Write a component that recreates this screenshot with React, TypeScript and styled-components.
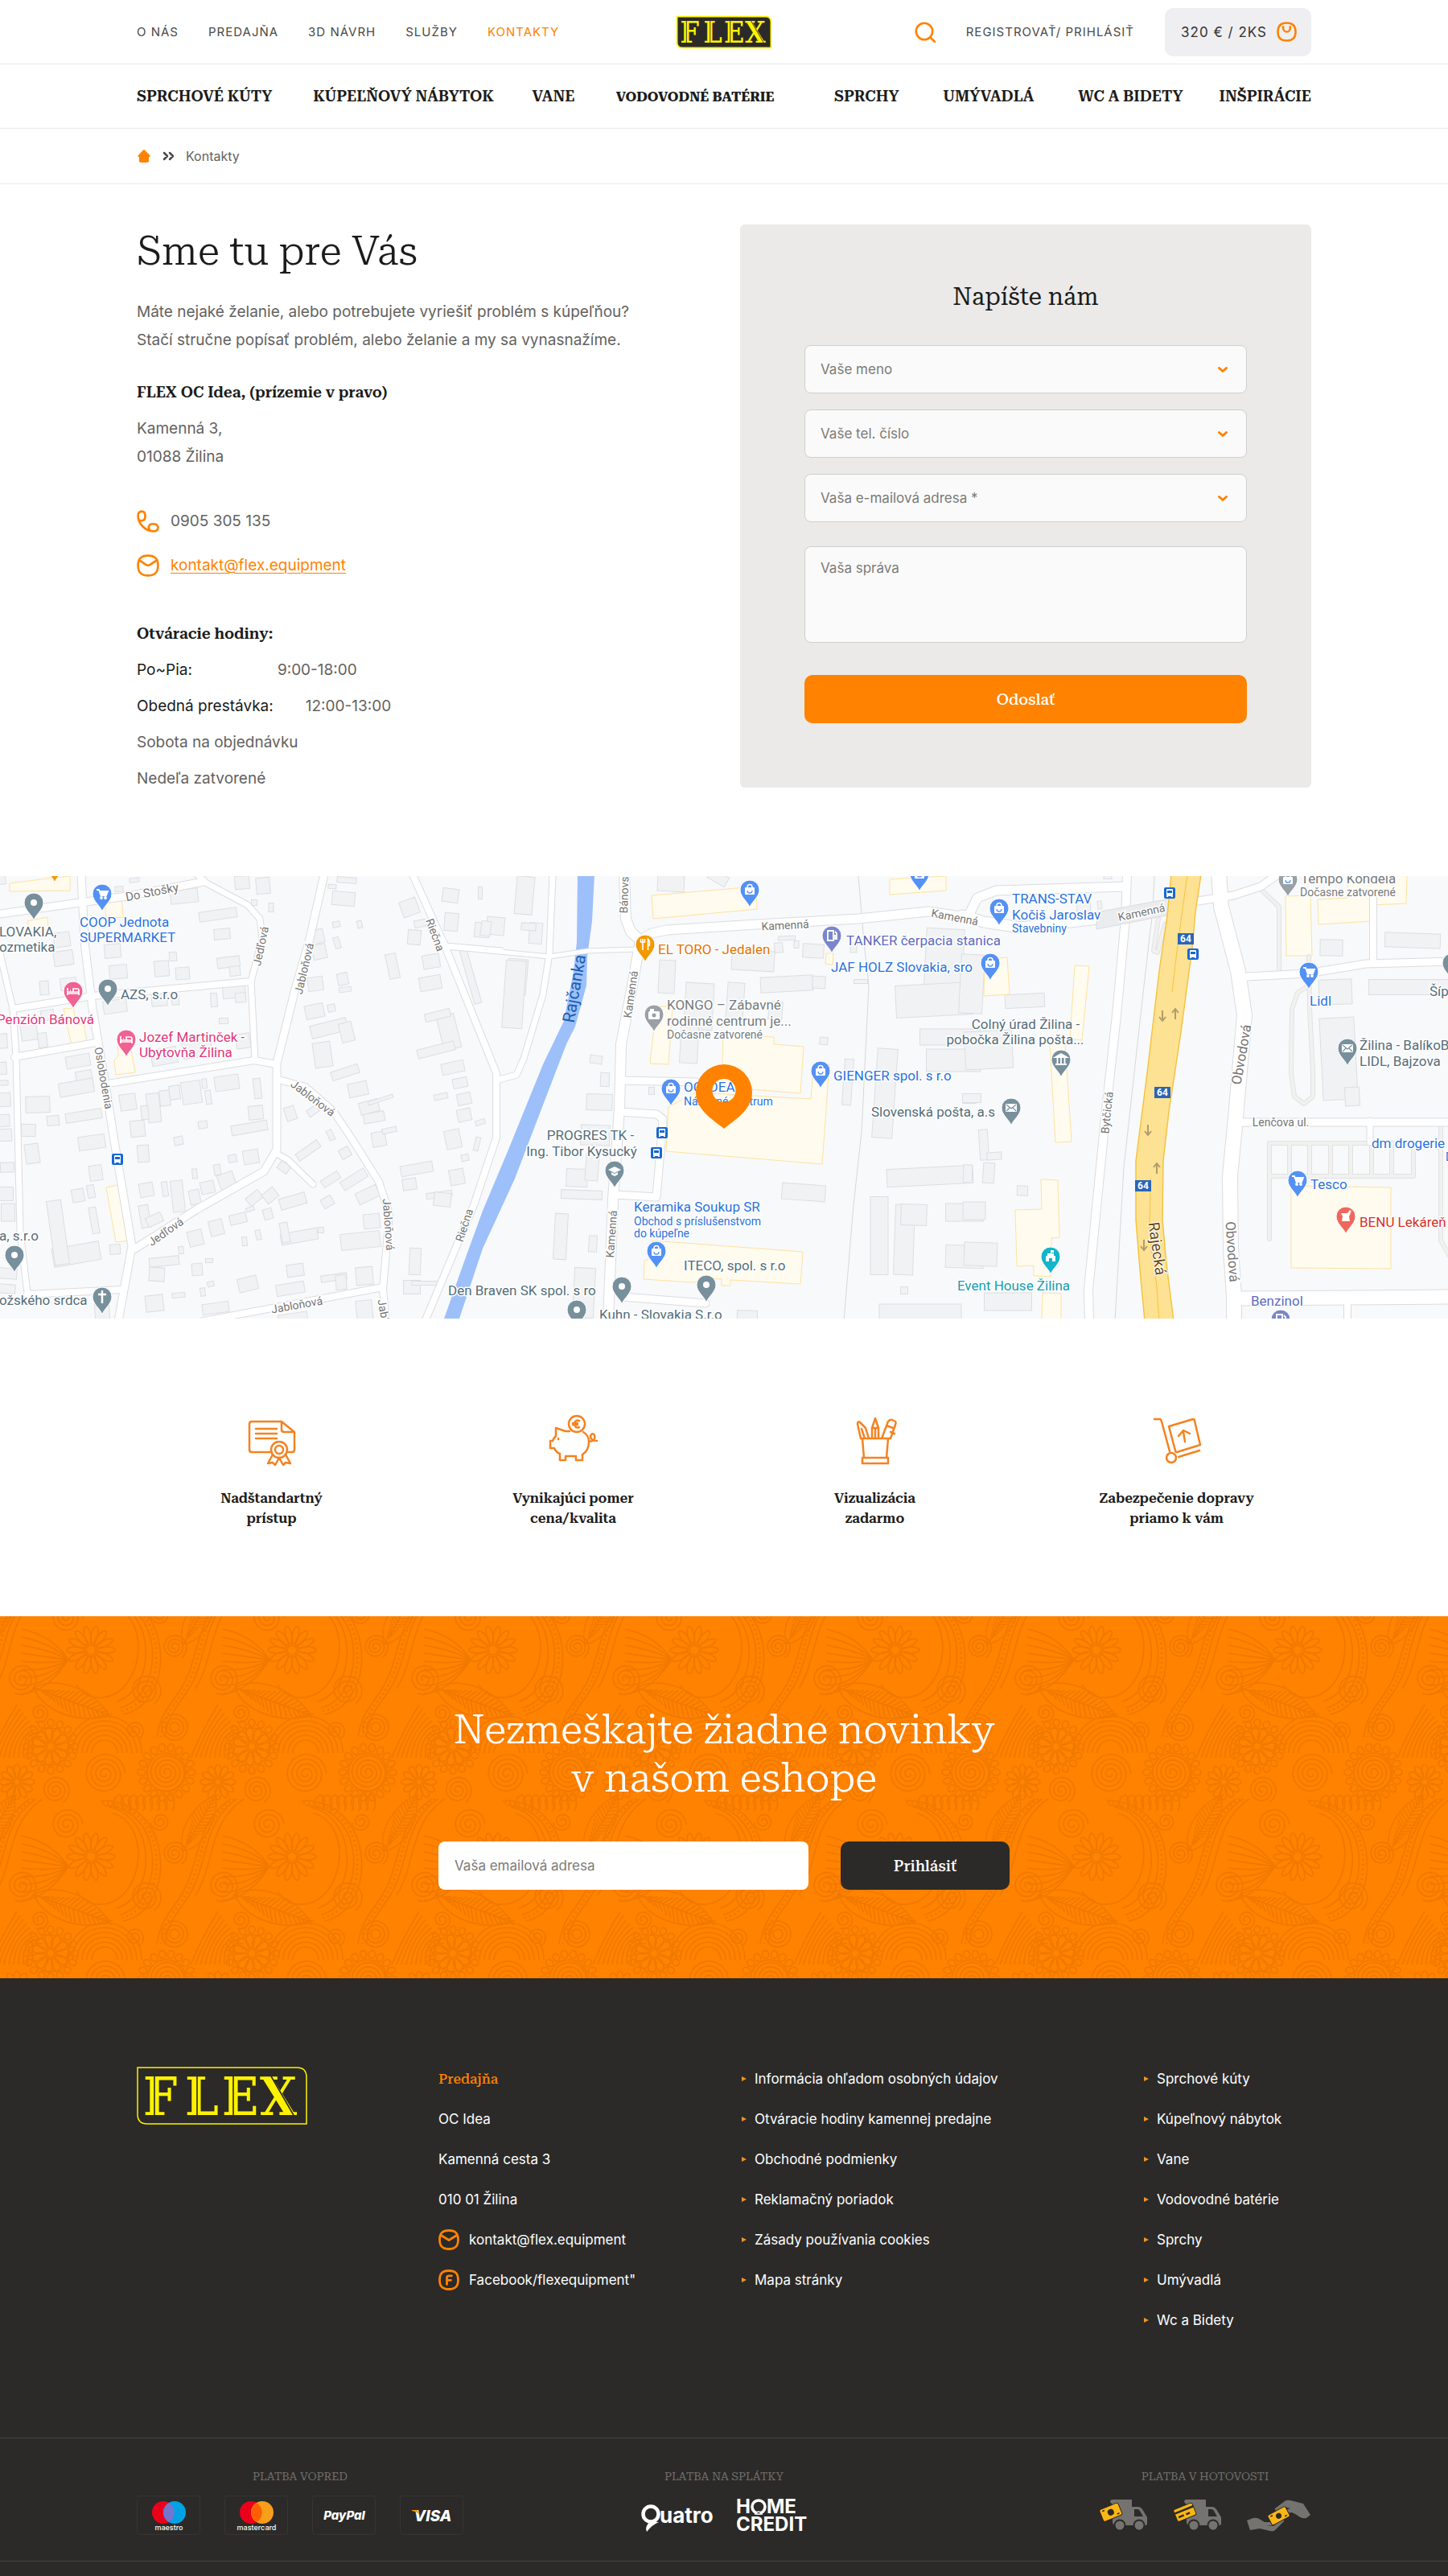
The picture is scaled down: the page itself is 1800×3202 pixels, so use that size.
import React from 'react';
import styled, { createGlobalStyle, css } from 'styled-components';

const slab = `"Roboto Slab", "Roboto Serif", "Noto Serif", "DejaVu Serif", serif`;
const sans = `Inter, "Liberation Sans", sans-serif`;
const orange = '#ff8200';
const ink = '#1b1b1a';
const grey = '#63625f';
const dark = '#2b2a28';
const yellow = '#fff200';

const Global = createGlobalStyle`
  *, *::before, *::after { box-sizing: border-box; }
  body { margin: 0; background: #fff; font-family: ${sans}; color: ${ink}; }
  h1, h2, h3, p, ul, dl, dd { margin: 0; padding: 0; }
  ul { list-style: none; }
  a { color: inherit; text-decoration: none; }
  svg { display: block; flex: none; }
`;

const Wrap = styled.div`
  width: 100%;
  max-width: 1500px;
  margin: 0 auto;
  padding: 0 20px;
`;

/* ---------- header ---------- */

const Bar = styled.div`
  border-bottom: 1px solid #e9e9ef;
`;

const TopRow = styled(Wrap)`
  display: grid;
  grid-template-columns: 1fr auto 1fr;
  align-items: center;
  height: 79px;
`;

const TopNav = styled.nav`
  display: flex;
  gap: 37px;
`;

const TopLink = styled.a<{ $active?: boolean }>`
  font-size: 15px;
  letter-spacing: 1px;
  white-space: nowrap;
  color: ${p => (p.$active ? orange : '#4a4a48')};
`;

const Account = styled.div`
  display: flex;
  justify-content: flex-end;
  align-items: center;
  gap: 38px;
`;

const IconButton = styled.button`
  padding: 0;
  border: 0;
  background: none;
  cursor: pointer;
`;

const Cart = styled.button`
  display: flex;
  align-items: center;
  gap: 12px;
  height: 60px;
  padding: 0 18px 0 20px;
  border: 0;
  border-radius: 10px;
  background: #efeff1;
  font: 17px ${sans};
  letter-spacing: 1px;
  color: #333;
  cursor: pointer;
`;

const MainNav = styled(Wrap)`
  display: grid;
  grid-template-columns: 219fr 272fr 104fr 271fr 135fr 168fr 175fr auto;
  align-items: center;
  height: 79px;
`;

const MainLink = styled.a<{ $small?: boolean }>`
  font: ${p => (p.$small ? '700 17px' : '600 19px')} ${slab};
  white-space: nowrap;
`;

const Crumbs = styled(Wrap)`
  display: flex;
  align-items: center;
  gap: 14px;
  height: 68px;
  font-size: 16px;
  color: ${grey};
`;

/* ---------- contact ---------- */

const Contact = styled(Wrap)`
  display: grid;
  grid-template-columns: 1fr minmax(0, 710px);
  align-items: start;
  gap: 40px;
  padding-top: 50px;
  padding-bottom: 104px;
`;

const Info = styled.section`
  font-size: 19px;
  line-height: 35px;
  color: ${grey};
`;

const Title = styled.h1`
  margin-bottom: 25px;
  font: 300 50px/66px ${slab};
  color: ${ink};
`;

const SubTitle = styled.h2<{ $top: number }>`
  margin-top: ${p => p.$top}px;
  margin-bottom: 10px;
  font: 600 19px/35px ${slab};
  color: ${ink};
`;

const Reach = styled.div`
  display: flex;
  flex-direction: column;
  gap: 20px;
  margin-top: 45px;
`;

const ReachRow = styled.div`
  display: flex;
  align-items: center;
  gap: 14px;
`;

const MailLink = styled.a`
  color: ${orange};
  text-decoration: underline;
  text-decoration-thickness: 1px;
  text-underline-offset: 3px;
`;

const Hours = styled.dl`
  display: flex;
  flex-direction: column;
  gap: 10px;
`;

const HourRow = styled.div<{ $gap?: number }>`
  display: flex;
  gap: ${p => p.$gap || 0}px;
  dt { color: ${ink}; }
`;

const Card = styled.form`
  display: flex;
  flex-direction: column;
  padding: 70px 80px 80px;
  border-radius: 6px;
  background: #ebeae8;
`;

const CardTitle = styled.h2`
  margin-bottom: 40px;
  font: 400 30px/40px ${slab};
  text-align: center;
`;

const fieldLook = css`
  width: 100%;
  border: 1px solid #cfcfcd;
  border-radius: 8px;
  background: #fafafa;
  font: 17px ${sans};
  color: #7b7a77;
`;

const Field = styled.label`
  position: relative;
  display: block;
  margin-bottom: 20px;
  svg {
    position: absolute;
    right: 23px;
    top: 26px;
    pointer-events: none;
  }
`;

const Select = styled.select`
  ${fieldLook}
  height: 60px;
  padding: 0 40px 0 19px;
  appearance: none;
`;

const Message = styled.textarea`
  ${fieldLook}
  display: block;
  height: 120px;
  margin: 10px 0 40px;
  padding: 16px 19px;
  resize: none;
  &::placeholder { color: #7b7a77; }
`;

const Submit = styled.button<{ $dark?: boolean }>`
  height: 60px;
  border: 0;
  border-radius: 10px;
  background: ${p => (p.$dark ? dark : orange)};
  font: 500 19px ${slab};
  color: #fff;
  cursor: pointer;
`;

/* ---------- benefits ---------- */

const Benefits = styled.ul`
  display: grid;
  grid-template-columns: repeat(4, 1fr);
  width: 100%;
  max-width: 1500px;
  margin: 0 auto;
  padding: 119px 0 109px;
`;

const Benefit = styled.li`
  display: flex;
  flex-direction: column;
  align-items: center;
  gap: 28px;
  font: 600 17px/25px ${slab};
  text-align: center;
  white-space: pre-line;
`;

/* ---------- newsletter ---------- */

const News = styled.section`
  position: relative;
  padding: 111px 20px 110px;
  background: ${orange};
  overflow: hidden;
`;

const PatternLayer = styled.svg`
  position: absolute;
  inset: 0;
  width: 100%;
  height: 100%;
`;

const NewsBody = styled.div`
  position: relative;
  max-width: 710px;
  margin: 0 auto;
`;

const NewsTitle = styled.h2`
  margin-bottom: 49px;
  font: 300 50px/60px ${slab};
  color: #fff;
  text-align: center;
`;

const NewsForm = styled.form`
  display: grid;
  grid-template-columns: 1fr 210px;
  gap: 40px;
`;

const NewsInput = styled.input`
  height: 60px;
  padding: 0 20px;
  border: 0;
  border-radius: 8px;
  background: #fff;
  font: 17px ${sans};
  &::placeholder { color: #7b7a77; opacity: 1; }
`;

/* ---------- footer ---------- */

const Foot = styled.footer`
  padding-bottom: 18px;
  background: ${dark};
  color: #fff;
`;

const FootGrid = styled(Wrap)`
  display: grid;
  grid-template-columns: 375fr 377fr 500fr 208fr;
  padding-top: 100px;
  padding-bottom: 121px;
`;

const FootLogo = styled.div`
  padding-top: 10px;
`;

const FootList = styled.ul`
  font-size: 17px;
  line-height: 50px;
`;

const FootItem = styled.li<{ $gap?: number }>`
  display: flex;
  align-items: center;
  gap: ${p => p.$gap || 0}px;
`;

const FootHead = styled.li`
  font: 500 17px/50px ${slab};
  color: ${orange};
`;

const PayBar = styled.div`
  border-top: 1px solid #454442;
  border-bottom: 1px solid #454442;
`;

const PayGrid = styled(Wrap)`
  display: grid;
  grid-template-columns: 1fr auto 1fr;
  padding-top: 37px;
  padding-bottom: 32px;
`;

const PayGroup = styled.section<{ $side?: string }>`
  display: flex;
  flex-direction: column;
  align-items: center;
  gap: 14px;
  justify-self: ${p => p.$side || 'center'};
`;

const PayTitle = styled.h3`
  font: 400 14px/20px ${slab};
  color: #716f6c;
`;

const PayRow = styled.div<{ $gap: number }>`
  display: flex;
  align-items: center;
  gap: ${p => p.$gap}px;
  height: 49px;
`;

const PayCard = styled.div`
  display: grid;
  place-items: center;
  width: 79px;
  height: 49px;
  border: 1px solid #363533;
  border-radius: 4px;
`;

/* ---------- icons ---------- */

const LogoArt = styled.svg`
  overflow: visible;
`;

const Logo = ({ width, filled }: { width: number; filled?: boolean }) => (
  <LogoArt width={width} height={Math.round(width * 72 / 212)} viewBox="0 0 212 72" role="img" aria-label="FLEX">
    <path d="M1 1H199Q211 1 211 13V71H13Q1 71 1 59Z" fill={dark} stroke={yellow} strokeWidth={filled ? 3 : 1.5} />
    <g fontFamily={`"Roboto Slab", "DejaVu Serif Condensed", "DejaVu Serif", serif`} fontWeight="700" fontSize="66" fill={yellow}>
      <text x="8" y="60">F</text>
      <text x="60" y="60">L</text>
      <text x="106" y="60">E</text>
      <text x="153" y="60">X</text>
    </g>
    <path d="M22 10V62M75 10V62M120 10V62M166 10L196 62" fill="none" stroke={dark} strokeWidth="1.6" />
  </LogoArt>
);

const Line = ({ size, children, w = 2.5 }: { size: number; w?: number; children: React.ReactNode }) => (
  <svg width={size} height={size} viewBox="0 0 26 26" fill="none" stroke={orange} strokeWidth={w} strokeLinecap="round" strokeLinejoin="round">
    {children}
  </svg>
);

const SearchIcon = () => <Line size={26} w={2.6}><circle cx="12" cy="12" r="10.2" /><path d="M19.5 19.5L25 25" /></Line>;
const ring = 'M13 1.5C21 1.5 24.5 5 24.5 13S21 24.5 13 24.5 1.5 21 1.5 13 5 1.5 13 1.5Z';
const BagIcon = () => <Line size={25} w={2.6}><path d={ring} /><path d="M8.5 6.5V8.5A4.5 4.5 0 0 0 17.5 8.5V6.5" /></Line>;
const MailIcon = () => <Line size={28}><path d={ring} /><path d="M4 7.5L10.5 12Q13 13.6 15.5 12L22 7.5" /></Line>;
const FootMailIcon = () => <Line size={26} w={2.8}><path d={ring} /><path d="M4 8L13 13.5L22 8" /></Line>;
const FaceIcon = () => <Line size={26} w={2.8}><path d={ring} /><path d="M10.5 18.5V10.5Q10.5 7.8 13 7.8H16.5M10.5 13.3H15.5" /></Line>;
const PhoneIcon = () => (
  <Line size={28}>
    <path d="M6 1.5C2.5 1.5 1.5 4 1.5 6.5C1.5 16 10 24.5 19.5 24.5C22.5 24.5 24.5 23 24.5 20S22 16 18.5 16C15.5 16 13.8 17 13.8 20C13.8 21.5 14.3 22.4 15.5 23.5M2.5 11.5C7 13.5 9.8 11.5 9.8 7.5C9.8 3.8 8.8 1.5 6 1.5" />
  </Line>
);
const Chevron = () => (
  <svg width="14" height="9" viewBox="0 0 14 9" fill="none" stroke={orange} strokeWidth="3" strokeLinecap="round" strokeLinejoin="round"><path d="M2.5 2.5L7 6.5L11.5 2.5" /></svg>
);
const HomeIcon = () => (
  <svg width="18" height="18" viewBox="0 0 18 18" fill={orange}><path d="M9 1Q10 1 16.5 8.5Q17 10 15.5 10H15V15Q15 17 13 17H5Q3 17 3 15V10H2.5Q1 10 1.5 8.5Q8 1 9 1Z" /></svg>
);
const Arrows = () => (
  <svg width="15" height="12" viewBox="0 0 15 12" fill="none" stroke="#4a4a48" strokeWidth="2.5" strokeLinecap="round" strokeLinejoin="round"><path d="M2 2L6 6L2 10M9 2L13 6L9 10" /></svg>
);
const Bullet = () => <svg width="6" height="8" viewBox="0 0 6 8" fill="#f7931e"><path d="M0 1L6 4L0 7Z" /></svg>;

const Art = ({ children }: { children: React.ReactNode }) => (
  <svg width="64" height="64" viewBox="0 0 64 64" fill="none" stroke="#f58220" strokeWidth="2.5" strokeLinecap="round" strokeLinejoin="round">{children}</svg>
);
const benefits = [
  {
    text: 'Nadštandartný\nprístup',
    art: <Art><path d="M31 47H7Q4 47 4 44V12Q4 9 7 9H44L60 22V44Q60 47 57 47H52M44 9V19Q44 22 47 22H60M12 18H38M12 24H38M12 30H38M33 50L27 61L33 60L36 63L41 54L46 63L49 60L55 61L49 50" /><circle cx="41" cy="44" r="10" /><circle cx="41" cy="44" r="5" /></Art>,
  },
  {
    text: 'Vynikajúci pomer\ncena/kvalita',
    art: <Art><path d="M27 21H22L10 17V27Q7 30 6 33H3V42H8Q10 47 15 49V57H22V52H35V57H43V50Q51 45 51 34Q51 26 44 22M13 31V30M51 34Q60 33 58 26Q55 22 53 27Q53 33 61 33M39 8Q34 6 33 12Q34 18 39 16M31 11H37M31 13H37" /><circle cx="36" cy="12" r="10" /></Art>,
  },
  {
    text: 'Vizualizácia\nzadarmo',
    art: <Art><path d="M14 30H50M16 30L18 54M48 30L46 54M16 54H48V61H16ZM14 30L10 12Q10 8 13 10L20 17L24 30M15 18L19 30M28 30V17L32 5L36 17V30M32 17V30M28 17H36M40 30L48 9Q50 6 53 7L57 9Q58 10 57 13L51 30M46 14L54 17M51 22L56 24" /></Art>,
  },
  {
    text: 'Zabezpečenie dopravy\npriamo k vám',
    art: <Art><path d="M4 6H11Q12 6 13 9L23 46M22 15L52 6Q54 6 54 8L61 38L32 47Q30 47 30 45ZM42 34L40 22M34 27L40 20L48 24M34 53L60 45" /><circle cx="25" cy="54" r="6" /></Art>,
  },
];

/* ---------- map ---------- */

type Sheet = { x: number; k: number };
const west: Sheet = { x: 0, k: 2.529 };
const mid: Sheet = { x: 600, k: 2.529 };
const east: Sheet = { x: 1200, k: 2.613 };
const px = (s: Sheet, x: number) => Math.round(s.x + x / s.k);
const py = (y: number) => Math.round((y - 25) / 2.751);
const line = (s: Sheet, pts: number[]) => {
  const out: string[] = [];
  for (let i = 0; i < pts.length; i += 2) out.push(`${px(s, pts[i])},${py(pts[i + 1])}`);
  return out.join(' ');
};

const roads: [Sheet, number, number[]][] = [
  [west, 7, [0, 290, 40, 480, 50, 640, 58, 1000, 62, 1240, 85, 1450]],
  [west, 9, [0, 155, 250, 115, 400, 95, 640, 45]],
  [west, 8, [40, 480, 290, 435, 790, 385]],
  [west, 8, [45, 645, 300, 595]],
  [west, 7, [620, 20, 650, 50, 780, 125, 818, 170, 824, 240, 790, 385, 802, 655]],
  [west, 8, [340, 735, 800, 655, 870, 668]],
  [west, 7, [870, 975, 905, 995, 985, 1078]],
  [west, 8, [875, 720, 960, 745, 1050, 830, 1110, 930, 1190, 1070, 1225, 1180, 1205, 1440, 1215, 1545]],
  [west, 9, [1020, 20, 970, 250, 925, 420, 870, 665, 870, 960, 830, 1035, 620, 1165, 425, 1300]],
  [west, 8, [85, 1455, 385, 1440]],
  [west, 8, [640, 1545, 1205, 1432]],
  [west, 9, [255, 15, 265, 250, 290, 480, 330, 720, 360, 930, 415, 1290, 372, 1545]],
  [west, 7, [1400, 265, 1575, 280]],
  [west, 8, [1295, 15, 1400, 270, 1560, 700, 1560, 920, 1490, 1150, 1335, 1550]],
  [mid, 7, [220, 20, 210, 290, 190, 430, 130, 650, 105, 705, 50, 720]],
  [mid, 5, [0, 278, 210, 300, 330, 282, 480, 276]],
  [mid, 9, [435, 725, 670, 730]],
  [mid, 9, [430, 832, 545, 838, 566, 855, 563, 900, 545, 1122, 415, 1115]],
  [mid, 9, [440, 1465, 700, 1485]],
  [mid, 12, [445, 15, 450, 170, 465, 215, 495, 245, 470, 400, 435, 600, 430, 820, 410, 1130, 395, 1545]],
  [mid, 11, [495, 245, 530, 220, 580, 208, 860, 190, 1180, 172, 1400, 145, 1520, 165]],
  [east, 11, [10, 160, 40, 100, 100, 75, 520, 60]],
  [east, 13, [-10, 160, 60, 182, 180, 200, 430, 172, 660, 135]],
  [east, 10, [525, 15, 520, 170, 490, 500, 455, 850, 400, 1440, 403, 1545]],
  [east, 9, [755, 110, 870, 90, 960, 62, 1010, 22]],
  [east, 8, [1325, 100, 1325, 320]],
  [east, 9, [915, 368, 1110, 357, 1300, 325, 1575, 317]],
  [east, 7, [1315, 860, 1315, 935]],
  [east, 9, [900, 867, 1575, 867]],
  [east, 17, [890, 1470, 1575, 1465]],
  [east, 8, [1240, 1465, 1240, 1545]],
  [east, 18, [822, 15, 830, 130, 885, 350, 908, 500, 878, 850, 860, 1050, 862, 1300, 872, 1460, 873, 1545]],
];

const lanes: [Sheet, number[]][] = [
  [east, [988, 1265, 988, 938, 1455, 938, 1455, 1052, 988, 1052]],
  ...[1052, 1118, 1185, 1252, 1320, 1385].map(x => [east, [x, 938, x, 1052]] as [Sheet, number[]]),
  [east, [1115, 400, 1080, 425, 1060, 480, 1057, 700, 1068, 780, 1100, 803, 1128, 780, 1130, 690, 1118, 480, 1115, 300]],
  [east, [965, 75, 1020, 130, 1020, 350]],
  [east, [1545, 880, 1545, 1270, 1575, 1330]],
  [east, [648, 190, 625, 285, 612, 280, 628, 170]],
];

const shops: [Sheet, number[]][] = [
  [west, [30, 50, 130, 35, 220, 25, 220, 75, 30, 78]],
  [west, [330, 110, 382, 100, 386, 165, 335, 170]],
  [west, [85, 180, 150, 165, 152, 205, 95, 230]],
  [west, [200, 480, 230, 475, 240, 530, 262, 530, 273, 595, 225, 602]],
  [west, [358, 655, 372, 640, 370, 605, 410, 600, 418, 650, 425, 695, 365, 705]],
  [west, [335, 1090, 380, 1080, 410, 1272, 365, 1278]],
  [mid, [530, 92, 860, 62, 863, 138, 537, 170]],
  [mid, [545, 470, 597, 472, 583, 670, 526, 666]],
  [mid, [757, 570, 915, 575, 915, 600, 1010, 607, 998, 768, 750, 745]],
  [mid, [585, 815, 670, 765, 1032, 788, 1040, 690, 1090, 670, 1068, 1010, 577, 965]],
  [mid, [1280, 35, 1457, 25, 1457, 75, 1280, 88]],
  [mid, [1080, 290, 1102, 290, 1100, 328, 1078, 325]],
  [mid, [530, 1270, 1007, 1310, 998, 1420, 780, 1405, 780, 1425, 750, 1425, 750, 1400, 660, 1415, 506, 1403, 508, 1340, 535, 1330]],
  [east, [62, 310, 135, 303, 145, 430, 60, 435]],
  [east, [355, 330, 403, 333, 378, 585, 340, 580]],
  [east, [275, 600, 325, 598, 345, 932, 292, 935]],
  [east, [245, 1063, 300, 1065, 305, 1260, 280, 1262, 278, 1395, 222, 1392, 222, 1357, 167, 1360, 162, 1168, 247, 1165]],
  [east, [250, 1450, 312, 1453, 310, 1545, 248, 1545]],
  [east, [1058, 1085, 1383, 1090, 1383, 1367, 1058, 1365]],
  [east, [1040, 95, 1120, 90, 1125, 298, 1043, 298]],
  [east, [1145, 105, 1240, 98, 1240, 20, 1435, 20, 1432, 118, 1322, 125, 1320, 180, 1148, 190]],
];

// Building footprints: centre x, centre y, width, height, rotation.
const houses: [Sheet, number[][]][] = [
  [west, [
    [0, 40, 35, 30, -8], [195, 243, 50, 50, -8], [200, 305, 60, 50, -8], [140, 408, 28, 48, -4], [215, 395, 50, 40, -6], [90, 555, 50, 60, -8], [135, 587, 28, 50, -8], [150, 500, 40, 35, -8],
    [422, 38, 30, 14, -6], [375, 68, 26, 16, -4], [580, 95, 85, 48, -6], [685, 157, 118, 32, -8], [760, 48, 45, 45, -4], [827, 57, 42, 56, -5], [853, 132, 16, 30, 0], [798, 115, 18, 20, 0],
    [698, 222, 50, 36, -5], [354, 280, 50, 48, -5], [543, 300, 24, 30, -4], [508, 340, 46, 52, -5], [372, 352, 56, 46, -5], [575, 357, 44, 42, -4], [718, 318, 70, 36, -7], [738, 350, 32, 34, -7],
    [735, 420, 72, 40, -5], [757, 440, 34, 32, -5], [672, 448, 20, 48, -3], [500, 445, 48, 46, -4], [362, 470, 74, 44, -8], [552, 450, 24, 34, -4], [702, 520, 28, 20, 0], [765, 590, 44, 50, -8],
    [515, 640, 80, 55, -10], [620, 615, 90, 60, -10], [245, 657, 76, 40, -10], [265, 722, 50, 60, -10], [240, 748, 110, 46, -10], [402, 798, 50, 56, -8], [712, 732, 76, 50, -8], [602, 765, 60, 78, -8], [642, 735, 16, 34, -6], [655, 782, 18, 48, -8],
    [482, 818, 40, 98, -6], [518, 783, 34, 52, -6], [550, 765, 32, 48, -8], [455, 833, 24, 48, -6], [432, 890, 46, 54, -6], [118, 805, 76, 56, -2], [168, 862, 38, 32, -6], [262, 845, 115, 34, -9], [88, 895, 46, 40, 2], [288, 935, 84, 46, -8],
    [637, 874, 28, 24, -8], [562, 930, 28, 28, -12], [785, 887, 115, 34, -10], [805, 835, 46, 46, -6], [810, 752, 22, 70, -6], [450, 975, 36, 58, -4], [100, 975, 44, 66, -8], [732, 990, 26, 26, -10], [790, 985, 48, 46, -10], [612, 1042, 16, 34, -5], [682, 1028, 20, 36, -10],
    [912, 837, 32, 48, -18], [985, 828, 36, 26, -35], [1040, 912, 18, 36, -25], [968, 962, 80, 28, -35], [1085, 970, 34, 32, -30], [892, 1022, 36, 30, 35], [1040, 1062, 60, 28, -32], [1112, 1062, 86, 32, -32], [1155, 1115, 70, 40, -25], [1030, 1138, 36, 32, -30],
    [998, 230, 38, 46, -14], [1060, 252, 18, 38, -18], [1058, 190, 22, 18, -12], [1130, 190, 16, 24, -14], [1003, 283, 44, 50, -12], [1080, 102, 72, 48, 5], [1090, 38, 60, 18, 5], [1045, 60, 26, 14, 4],
    [992, 395, 48, 46, -8], [1077, 377, 34, 42, -12], [1086, 414, 38, 16, -8], [990, 487, 58, 48, -12], [1042, 477, 22, 24, -12], [1035, 545, 116, 44, -14], [1090, 560, 40, 66, -14], [1015, 635, 56, 84, -8], [1085, 695, 88, 30, -18], [1125, 755, 60, 48, -12],
    [1160, 815, 60, 40, -15], [1195, 790, 80, 12, -18], [1175, 850, 66, 34, -10], [1190, 925, 44, 50, -10], [1225, 895, 46, 16, -12], [1288, 133, 54, 56, -20], [1320, 188, 36, 24, -10], [1303, 235, 40, 50, 5], [1235, 332, 34, 86, -12], [1356, 317, 54, 48, -10],
    [1353, 390, 68, 46, -10], [1480, 370, 22, 190, -16], [1420, 182, 44, 60, 5], [1515, 208, 46, 50, 5], [1509, 82, 12, 40, 0], [1415, 90, 50, 48, 8], [1410, 560, 56, 118, -14], [1375, 500, 80, 28, -14], [1370, 620, 120, 30, -14],
    [1425, 680, 70, 38, -12], [1447, 733, 46, 32, -12], [1385, 780, 42, 18, -12], [1460, 787, 42, 38, -12], [1460, 842, 44, 40, -12], [1510, 868, 30, 16, -18], [1425, 925, 48, 62, -12], [1500, 942, 16, 46, 14], [1462, 988, 22, 22, -12], [1310, 1027, 100, 36, -10],
    [1287, 1080, 44, 38, -8], [1436, 1055, 46, 52, -10], [1380, 1115, 80, 20, -8], [1390, 1130, 54, 48, 6], [1305, 1343, 36, 90, 2], [1295, 1430, 54, 46, 0], [1340, 1417, 90, 14, 0],
    [300, 1040, 40, 52, -8], [246, 1117, 38, 44, -10], [287, 1103, 24, 44, -10], [297, 1202, 24, 90, -10], [361, 1302, 34, 34, -4], [240, 1318, 148, 64, -10], [182, 1245, 46, 220, -8], [460, 1098, 44, 48, -10], [518, 1094, 18, 50, -8], [560, 1120, 38, 108, -6], [613, 1122, 34, 50, -12], [653, 1090, 42, 42, -12], [712, 1067, 50, 56, -20],
    [455, 1190, 30, 78, -10], [485, 1200, 50, 34, -25], [614, 1263, 46, 52, -14], [680, 1227, 42, 52, -14], [748, 1198, 54, 34, -14], [800, 1125, 48, 34, -38], [850, 1117, 42, 38, -38], [920, 1137, 84, 38, -16], [842, 1180, 28, 36, -16], [786, 1163, 26, 14, -20], [770, 1273, 14, 30, -5], [812, 1253, 14, 32, -12],
    [940, 1258, 116, 38, -10], [895, 1245, 26, 68, -10], [1010, 1236, 18, 20, 0], [1132, 1270, 124, 56, -6], [1168, 1204, 50, 50, -6], [515, 1342, 94, 30, -6], [492, 1388, 48, 48, 4], [619, 1370, 32, 40, -5], [658, 1340, 22, 14, 0], [568, 1305, 14, 26, -8], [778, 1420, 60, 46, -14], [928, 1372, 52, 42, -8],
    [663, 1420, 20, 16, -14], [638, 1446, 16, 28, -8], [562, 1458, 40, 16, -6], [485, 1487, 56, 56, -6], [678, 1503, 84, 36, -8], [912, 1435, 88, 38, -9], [1050, 1398, 80, 22, -8], [1072, 1415, 32, 50, -4], [1145, 1392, 54, 60, -5], [920, 1535, 90, 30, -8], [1145, 1510, 50, 70, -6],
    [320, 1510, 46, 70, -4], [12, 790, 40, 48, -3], [10, 862, 40, 40, -3], [15, 910, 44, 42, -3], [5, 733, 40, 16, 0], [5, 682, 30, 40, -4], [8, 590, 30, 50, -4], [22, 1020, 44, 34, -2], [20, 1113, 44, 48, 0], [25, 1175, 44, 60, 0], [22, 1385, 60, 36, 4], [22, 1436, 50, 30, 4],
  ]],
  [mid, [
    [132, 90, 56, 130, 5], [40, 195, 56, 60, 5], [10, 205, 30, 50, 8], [168, 220, 40, 72, 4], [145, 198, 46, 24, 4], [110, 370, 60, 120, 5], [98, 430, 62, 230, 4], [357, 653, 38, 28, 8], [385, 722, 28, 46, 2], [367, 797, 80, 56, 2], [355, 910, 90, 70, 2], [295, 1058, 66, 60, 2], [345, 1020, 40, 90, 4], [310, 1115, 128, 30, 2],
    [592, 50, 84, 56, 3], [740, 30, 60, 36, 30], [578, 370, 50, 114, 3], [680, 470, 88, 160, 3], [650, 590, 56, 150, 3], [795, 455, 52, 130, 4], [850, 315, 135, 70, 3], [930, 270, 26, 34, -6], [955, 237, 52, 14, -3], [986, 260, 16, 26, 0], [1040, 282, 66, 48, 3], [957, 395, 165, 52, -3], [1058, 388, 40, 40, 3],
    [920, 485, 44, 60, 4], [1073, 590, 26, 24, 5], [530, 760, 18, 26, 0], [245, 1258, 40, 156, 3], [347, 1282, 26, 54, 3], [318, 1450, 66, 170, 3], [1010, 1105, 136, 54, 4], [832, 1527, 62, 34, 2],
    [1148, 730, 28, 156, 4], [1265, 767, 64, 304, 4], [1188, 386, 44, 14, 0], [1450, 350, 120, 290, 3], [1420, 450, 240, 110, -3], [1470, 575, 190, 56, 0], [1480, 655, 170, 78, 0], [1530, 790, 40, 26, 0], [1405, 1052, 270, 60, -3], [1248, 1255, 56, 268, 0], [1325, 1268, 60, 240, 2], [1355, 1182, 80, 72, 2],
    [1515, 1175, 120, 60, 0], [1515, 1325, 120, 78, 2], [1326, 1442, 24, 26, 0], [1375, 1515, 258, 54, 0], [1165, 270, 20, 32, 0],
  ]],
  [east, [
    [22, 395, 76, 200, 3], [75, 620, 155, 130, -3], [193, 452, 128, 46, -3], [60, 945, 28, 104, -4], [95, 983, 48, 26, -4], [75, 1040, 36, 70, 4], [8, 1043, 30, 60, 2], [185, 1100, 34, 34, 2], [28, 1170, 74, 60, 0], [50, 1318, 106, 80, 2], [138, 1480, 154, 60, 0], [462, 25, 26, 20, 0], [20, 785, 60, 30, 0], [437, 125, 12, 28, -8],
    [1190, 270, 74, 56, 1], [1452, 245, 180, 50, 2], [1203, 420, 108, 86, -2], [1445, 405, 270, 52, 0], [1212, 650, 112, 280, -3], [1258, 780, 46, 62, -3], [385, 130, 44, 34, -4],
  ]],
];

const pinColors = { slate: '#78909c', blue: '#5491f5', pink: '#f06292', amber: '#f29900', grey: '#9aa0a6', violet: '#7986cb', teal: '#12b5cb', red: '#ee675c' };
type Kind = 'dot' | 'bag' | 'cart' | 'bed' | 'food' | 'cap' | 'mail' | 'bank' | 'pump' | 'cross' | 'camera' | 'fort' | 'mortar';

const glyphs: Record<Kind, React.ReactNode> = {
  dot: <circle r="4" fill="#fff" />,
  bag: <g><rect x="-6" y="-3" width="12" height="9" rx="1" fill="#fff" /><path d="M-3 -3A3 3.5 0 0 1 3 -3" fill="none" stroke="#fff" strokeWidth="1.6" /><path d="M-3 1A3 3 0 0 0 3 1" fill="none" stroke="#5491f5" strokeWidth="1.3" /></g>,
  cart: <g fill="none" stroke="#fff" strokeWidth="1.8"><path d="M-7 -5H-4L-1.5 2H5L7 -3H-3" fill="#fff" /><circle cx="-1" cy="5" r="1" /><circle cx="4" cy="5" r="1" /></g>,
  bed: <path d="M-7 -4V5M-7 3H7M7 5V0M-7 1H7V-1Q7 -3 5 -3H0V1M-4 -1H-3" fill="none" stroke="#fff" strokeWidth="1.7" />,
  food: <path d="M-3 -7V7M-5.5 -7V-3H-.5V-7M3.5 7V-7Q6 -5 5.5 1H3.5" fill="none" stroke="#fff" strokeWidth="1.6" />,
  cap: <g fill="#fff"><path d="M-8 -1L0 -5L8 -1L0 3Z" /><path d="M-4 2L0 4L4 2V5L0 7L-4 5Z" /></g>,
  mail: <g><rect x="-7" y="-5" width="14" height="10" rx="1" fill="#fff" /><path d="M-6 -4L0 1L6 -4M-6 4L-2 0M6 4L2 0" fill="none" stroke="#78909c" strokeWidth="1.2" /></g>,
  bank: <path d="M-7 -3L0 -7L7 -3ZM-7 6H7M-4.5 -2V5M0 -2V5M4.5 -2V5" fill="#fff" stroke="#fff" strokeWidth="1.8" />,
  pump: <path d="M-5 -6H2V6H-5ZM2 0H4V4H6V-3L4 -5" fill="none" stroke="#fff" strokeWidth="1.8" />,
  cross: <path d="M0 -8V8M-5 -3H5" fill="none" stroke="#fff" strokeWidth="2.5" />,
  camera: <g><rect x="-7" y="-4" width="14" height="10" rx="1.5" fill="#fff" /><rect x="-5" y="-7" width="5" height="3" fill="#fff" /><circle cy="1" r="2.5" fill="#9aa0a6" /></g>,
  fort: <path d="M-6 6V-1H-4V-4H0V-8H4V-5H1V-4H4V-1H6V6H2V2H-2V6Z" fill="#fff" />,
  mortar: <path d="M-6 -4H2L5 -8L7 -6L5 -4H6L4 0L5 6H-5L-4 0Z" fill="#fff" />,
};

const pins: [Sheet, number, number, string, Kind][] = [
  [west, 106, 175, pinColors.slate, 'dot'],
  [west, 321, 145, pinColors.blue, 'cart'],
  [west, 172, 48, pinColors.amber, 'dot'],
  [west, 229, 478, pinColors.pink, 'bed'],
  [west, 340, 470, pinColors.slate, 'dot'],
  [west, 397, 645, pinColors.pink, 'bed'],
  [west, 46, 1382, pinColors.slate, 'dot'],
  [west, 321, 1523, pinColors.slate, 'cross'],
  [mid, 839, 132, pinColors.blue, 'bag'],
  [mid, 1373, 76, pinColors.blue, 'bag'],
  [mid, 511, 320, pinColors.amber, 'food'],
  [mid, 1098, 290, pinColors.violet, 'pump'],
  [mid, 539, 560, pinColors.grey, 'camera'],
  [mid, 593, 811, pinColors.blue, 'bag'],
  [mid, 1061, 752, pinColors.blue, 'bag'],
  [mid, 415, 1092, pinColors.slate, 'cap'],
  [mid, 545, 1368, pinColors.blue, 'bag'],
  [mid, 438, 1488, pinColors.slate, 'dot'],
  [mid, 703, 1482, pinColors.slate, 'dot'],
  [mid, 296, 1568, pinColors.slate, 'dot'],
  [east, 109, 195, pinColors.blue, 'bag'],
  [east, 80, 382, pinColors.blue, 'bag'],
  [east, 312, 712, pinColors.slate, 'bank'],
  [east, 149, 878, pinColors.slate, 'mail'],
  [east, 276, 1388, pinColors.teal, 'fort'],
  [east, 1047, 96, pinColors.grey, 'bag'],
  [east, 1115, 412, pinColors.blue, 'cart'],
  [east, 1580, 382, pinColors.slate, 'dot'],
  [east, 1240, 673, pinColors.slate, 'mail'],
  [east, 1080, 1125, pinColors.blue, 'cart'],
  [east, 1236, 1250, pinColors.red, 'mortar'],
  [east, 1024, 1602, pinColors.violet, 'pump'],
];

const slateT = '#546e7a', blueT = '#2a72de', pinkT = '#e0387a', greyT = '#757b80', road = '#757575';
const placeNames: [Sheet, number, number, string, string, number, string?][] = [
  [west, -2, 231, 'LOVAKIA,', slateT, 17], [west, -2, 283, 'ozmetika', slateT, 17],
  [west, 250, 199, 'COOP Jednota', blueT, 17], [west, 250, 251, 'SUPERMARKET', blueT, 17],
  [west, 380, 445, 'AZS, s.r.o', slateT, 17],
  [west, -10, 532, 'Penzión Bánová', pinkT, 17],
  [west, 438, 591, 'Jozef Martinček -', pinkT, 17], [west, 438, 644, 'Ubytovňa Žilina', pinkT, 17],
  [west, -2, 1272, 'a, s.r.o', slateT, 17], [west, -2, 1492, 'ožského srdca', slateT, 17],
  [mid, -110, 1458, 'Den Braven SK spol. s ro', slateT, 17],
  [mid, 552, 291, 'EL TORO - Jedalen', '#e37400', 17],
  [mid, 1142, 261, 'TANKER čerpacia stanica', '#5c6bc0', 17],
  [mid, 1095, 353, 'JAF HOLZ Slovakia, sro', blueT, 17],
  [mid, 580, 481, 'KONGO – Zábavné', greyT, 17], [mid, 580, 536, 'rodinné centrum je...', greyT, 17], [mid, 580, 580, 'Dočasne zatvorené', greyT, 14],
  [mid, 633, 763, 'OC IDEA', blueT, 17], [mid, 633, 808, 'Nákupné centrum', blueT, 14],
  [mid, 1102, 725, 'GIENGER spol. s r.o', blueT, 17],
  [mid, 338, 928, 'PROGRES TK -', slateT, 17, 'middle'], [mid, 310, 983, 'Ing. Tibor Kysucký', slateT, 17, 'middle'],
  [mid, 475, 1173, 'Keramika Soukup SR', blueT, 17], [mid, 475, 1218, 'Obchod s príslušenstvom', blueT, 14], [mid, 475, 1261, 'do kúpeľne', blueT, 14],
  [mid, 633, 1373, 'ITECO, spol. s r.o', slateT, 17],
  [mid, 366, 1540, 'Kuhn - Slovakia S.r.o', slateT, 17],
  [mid, 1222, 848, 'Slovenská pošta, a.s', slateT, 17],
  [east, 152, 119, 'TRANS-STAV', blueT, 17], [east, 152, 173, 'Kočiš Jaroslav', blueT, 17], [east, 152, 217, 'Stavebniny', blueT, 14],
  [east, 196, 547, 'Colný úrad Žilina -', slateT, 17, 'middle'], [east, 162, 601, 'pobočka Žilina pošta...', slateT, 17, 'middle'],
  [east, 158, 1443, 'Event House Žilina', '#129eaf', 17, 'middle'],
  [east, 1090, 49, 'Tempo Kondela', greyT, 17], [east, 1088, 93, 'Dočasne zatvorené', greyT, 14],
  [east, 1118, 467, 'Lidl', blueT, 17], [east, 1508, 434, 'Šípka', slateT, 17],
  [east, 1281, 620, 'Žilina - BalíkoBox', slateT, 17], [east, 1281, 673, 'LIDL, Bajzova', slateT, 17],
  [east, 1320, 954, 'dm drogerie', blueT, 17], [east, 1560, 998, 'Dro', blueT, 14],
  [east, 1122, 1096, 'Tesco', blueT, 17], [east, 1280, 1224, 'BENU Lekáreň', '#d93025', 17],
  [east, 927, 1493, 'Benzinol', '#5c6bc0', 17],
];

const streets: [Sheet, number, number, string, number, number?][] = [
  [west, 478, 80, 'Do Stošky', -11, 15], [west, 820, 265, 'Jedľová', -78], [west, 955, 340, 'Jabloňová', -77], [west, 1368, 225, 'Riečna', 70],
  [west, 325, 715, 'Oslobodenia', 80], [west, 985, 785, 'Jabloňová', 37], [west, 522, 1240, 'Jedľová', -35], [west, 1222, 1215, 'Jabloňová', 86],
  [west, 1460, 1220, 'Riečna', -72], [west, 932, 1490, 'Jabloňová', -10], [west, 1215, 1560, 'Jabloňová', 80],
  [mid, 446, 70, 'Bánovská', -88], [mid, 465, 430, 'Kamenná', -82], [mid, 952, 192, 'Kamenná', -3], [mid, 1485, 165, 'Kamenná', 11], [mid, 405, 1250, 'Kamenná', -86],
  [east, 573, 150, 'Kamenná', -12], [east, 461, 835, 'Bytčická', -84], [east, 898, 635, 'Obvodová', -80, 17], [east, 864, 1310, 'Obvodová', 86, 17], [east, 1024, 867, 'Lenčova ul.', 0],
];

const Stop = ({ s, x, y }: { s: Sheet; x: number; y: number }) => (
  <g transform={`translate(${px(s, x)} ${py(y)})`}>
    <rect x="-7" y="-7" width="14" height="14" rx="2" fill="#1967d2" />
    <rect x="-4" y="-5" width="8" height="9" rx="1" fill="#fff" />
    <rect x="-3" y="-3" width="6" height="3" fill="#1967d2" />
    <path d="M-3 5V4M3 5V4" stroke="#fff" strokeWidth="2" />
  </g>
);

const Shield = ({ x, y }: { x: number; y: number }) => (
  <g transform={`translate(${px(east, x)} ${py(y)})`}>
    <rect x="-10" y="-7" width="20" height="14" fill="#2a66b8" />
    <text y="4" fontSize="12" fontWeight="700" fill="#fff" textAnchor="middle">64</text>
  </g>
);

const MapBox = styled.section`
  height: 550px;
  overflow: hidden;
  background: #f8f9fb;
`;

const MapArt = () => (
  <svg width="100%" height="550" viewBox="0 0 1800 550" preserveAspectRatio="xMidYMid slice" fontFamily="Roboto, sans-serif" role="img" aria-label="Mapa – OC Idea, Žilina">
    <rect width="1800" height="550" fill="#f8f9fb" />
    <g fill="none" stroke="#d6d8db" strokeWidth="1">
      <polyline points={line(mid, [1180, 25, 1200, 250, 1214, 400, 1190, 900, 1165, 1150, 1135, 1545])} />
      <polyline points={line(east, [615, 25, 610, 140, 575, 450, 515, 1020, 485, 1545])} />
    </g>
    <g fill="#f1f2f4" stroke="#dcdee1">
      {houses.map(([s, list]) => list.map(([cx, cy, w, h, r], i) => {
        const ww = Math.round(w / s.k), hh = Math.round(h / 2.751);
        return <rect key={`${s.x}-${i}`} x={-ww / 2} y={-hh / 2} width={ww} height={hh} transform={`translate(${px(s, cx)} ${py(cy)}) rotate(${r})`} />;
      }))}
    </g>
    <g fill="#fffbee" stroke="#fde3a0">
      {shops.map(([s, p], i) => <polygon key={i} points={line(s, p)} />)}
    </g>
    <polygon fill="#9dc0fa" points={line(mid, [298, 20, 352, 20, 345, 180, 328, 300, 325, 400, 290, 540, 262, 600, 200, 780, 100, 1060, 0, 1300, -76, 1545, -124, 1545, -60, 1350, 0, 1170, 80, 960, 190, 670, 255, 520, 285, 350, 297, 250])} />
    <g fill="none" strokeLinejoin="round" strokeLinecap="round">
      {lanes.map(([s, p], i) => <polyline key={i} points={line(s, p)} stroke="#e2e2e2" strokeWidth="6" />)}
      {lanes.map(([s, p], i) => <polyline key={`l${i}`} points={line(s, p)} stroke="#f1f1f0" strokeWidth="4" />)}
      {roads.map(([s, w, p], i) => <polyline key={i} points={line(s, p)} stroke="#dadce0" strokeWidth={w + 2} />)}
      {roads.map(([s, w, p], i) => <polyline key={`r${i}`} points={line(s, p)} stroke="#fff" strokeWidth={w} />)}
    </g>
    <polygon fill="#ebecee" stroke="#dadce0" points={line(east, [425, 150, 680, 100, 680, 155, 425, 207])} />
    <polygon fill="#fde293" stroke="#f6c340" strokeWidth="1.5" points={line(east, [670, 20, 765, 20, 748, 150, 738, 270, 700, 560, 660, 830, 643, 1000, 641, 1200, 652, 1350, 677, 1545, 583, 1545, 568, 1370, 553, 1200, 555, 1000, 590, 700, 630, 350, 655, 160])} />
    <g fill="none" stroke="#f6c340">
      <polyline points={line(east, [722, 20, 690, 260, 672, 420])} />
      <polyline points={line(east, [600, 1060, 598, 1250, 622, 1430, 630, 1545])} />
    </g>
    <g fill="none" stroke="#b09c6a" strokeWidth="2">
      {[[641, 500, 1], [593, 892, 1], [581, 1286, 1], [683, 497, -1], [621, 1025, -1]].map(([x, y, d], i) => (
        <path key={i} d="M0 -6V6M-4 2L0 7L4 2" transform={`translate(${px(east, x)} ${py(y)}) scale(1 ${d})`} />
      ))}
    </g>
    <Shield x={715} y={239} /><Shield x={641} y={765} /><Shield x={578} y={1084} />
    <Stop s={west} x={368} y={992} /><Stop s={mid} x={564} y={902} /><Stop s={mid} x={545} y={971} /><Stop s={east} x={665} y={84} /><Stop s={east} x={739} y={291} />
    <g fill={road} stroke="#fff" strokeWidth="3" paintOrder="stroke" textAnchor="middle">
      {streets.map(([s, x, y, t, r, size = 14], i) => (
        <text key={i} fontSize={size} dy="5" transform={`translate(${px(s, x)} ${py(y)}) rotate(${r})`}>{t}</text>
      ))}
    </g>
    <text fontSize="21" fill="#1a5fb4" textAnchor="middle" dy="6" transform={`translate(${px(mid, 290)} ${py(410)}) rotate(-80)`}>Rajčanka</text>
    <text fontSize="19" fill="#6b4c16" stroke="#fff" strokeWidth="2" paintOrder="stroke" textAnchor="middle" dy="6" transform={`translate(${px(east, 622)} ${py(1298)}) rotate(82)`}>Rajecká</text>
    <g>
      {pins.map(([s, x, y, c, k], i) => (
        <g key={i} transform={`translate(${px(s, x)} ${py(y)})`}>
          <path d="M0 0C-2 -7 -12 -13 -12 -22A12 12 0 0 1 12 -22C12 -13 2 -7 0 0Z" fill={c} stroke="#fff" strokeWidth="1" />
          <g transform="translate(0 -22)">{glyphs[k]}</g>
        </g>
      ))}
    </g>
    <g stroke="#fff" strokeWidth="3" strokeLinejoin="round" paintOrder="stroke">
      {placeNames.map(([s, x, y, t, c, size, anchor], i) => (
        <text key={i} x={px(s, x)} y={py(y)} fill={c} fontSize={size} textAnchor={(anchor as 'middle') || 'start'}>{t}</text>
      ))}
    </g>
    <path fillRule="evenodd" fill={orange} transform="translate(900 235)" d="M0 79C-10 70 -35 57 -35 34A35 35 0 0 1 35 34C35 57 10 70 0 79ZM0 17A14.5 14.5 0 1 0 0 46A14.5 14.5 0 1 0 0 17Z" />
  </svg>
);

/* ---------- paisley pattern ---------- */

const spiral = (cx: number, cy: number, r: number, turns: number, start = 0) => {
  const pts: string[] = [];
  const n = turns * 16;
  for (let i = 0; i <= n; i++) {
    const a = start + (i / 16) * Math.PI * 2;
    const q = 2 + (r - 2) * (i / n);
    pts.push(`${(cx + q * Math.cos(a)).toFixed(1)},${(cy + q * Math.sin(a)).toFixed(1)}`);
  }
  return `M${pts.join('L')}`;
};

const Petals = ({ x, y, n, inner, outer, w }: { x: number; y: number; n: number; inner: number; outer: number; w: number }) => (
  <g transform={`translate(${x} ${y})`}>
    <circle r={inner - 2} />
    {Array.from({ length: n }, (_, i) => (
      <ellipse key={i} cx={(inner + outer) / 2} rx={(outer - inner) / 2} ry={w} transform={`rotate(${(360 / n) * i})`} />
    ))}
  </g>
);

const Leaf = ({ x, y, r, s = 1 }: { x: number; y: number; r: number; s?: number }) => (
  <g transform={`translate(${x} ${y}) rotate(${r}) scale(${s})`}>
    <path d="M-50 0C-30 -24 20 -24 50 0C20 24 -30 24 -50 0M-50 0H50" />
    {Array.from({ length: 15 }, (_, i) => {
      const t = -40 + i * 6;
      const h = 17 * (1 - Math.abs(t) / 52);
      return <path key={i} d={`M${t} 0L${t + 9} ${-h}M${t} 0L${t + 9} ${h}`} />;
    })}
  </g>
);

const Motifs = () => (
  <g>
    <path d="M95 8C140 20 135 100 95 118C75 125 60 120 50 105M90 0C150 12 150 110 100 126M84 -2C160 0 162 118 104 134M80 -8C172 -10 176 128 108 142" />
    <path d="M82 -5C166 -6 169 123 106 138" strokeDasharray="2 4" strokeWidth="3" />
    <Petals x={68} y={62} n={14} inner={8} outer={30} w={4} />
    {Array.from({ length: 9 }, (_, i) => <path key={i} d={`M40 74Q${20 - i} ${44 + i * 9} ${-18} ${36 + i * 10}`} />)}
    <path d={spiral(38, 22, 20, 3)} />
    <Leaf x={44} y={126} r={20} />
    <path d={spiral(136, 112, 20, 3, 1)} />
    <path d={spiral(232, 98, 20, 3, 2)} />
    <path d="M250 -10C205 20 215 70 190 110C175 134 165 140 160 170M242 -10C196 20 205 70 180 110C165 134 155 140 150 170M258 -10C213 20 223 70 198 110" />
    <path d="M246 -10C200 20 210 70 185 110C170 134 160 140 155 170" strokeDasharray="2 4" strokeWidth="3" />
    <Leaf x={203} y={20} r={-60} s={0.8} />
    <path d={spiral(172, 58, 16, 3, 1)} />
    <path d={spiral(154, 18, 12, 2, 3)} />
    {[16, 22, 28, 34, 40, 46].map(r => <path key={r} d={`M${85 - r} 190A${r} ${r} 0 0 1 ${85 + r} 190`} />)}
    <Petals x={18} y={182} n={11} inner={7} outer={24} w={5} />
    <Petals x={18} y={182} n={16} inner={25} outer={34} w={4} />
    <path d={spiral(85, 216, 26, 4, 0)} />
    <path d={spiral(162, 214, 24, 4, 2)} />
    <Petals x={162} y={214} n={18} inner={26} outer={36} w={4} />
    {Array.from({ length: 9 }, (_, i) => <path key={`w${i}`} d={`M${192 + i * 6} 196Q${204 + i * 4} 166 ${226 + i * 4} ${130 + i * 5}`} />)}
    <Petals x={226} y={226} n={12} inner={6} outer={22} w={4} />
    {[6, 11, 16].map(r => <circle key={r} cx="172" cy="158" r={r} />)}
    {Array.from({ length: 8 }, (_, i) => <path key={`s${i}`} d={`M${100 + i * 9} 260Q${92 + i * 9} 246 ${104 + i * 9} 242Q${112 + i * 9} 250 ${106 + i * 9} 262`} />)}
    <path d={spiral(24, 236, 18, 3, 1)} />
    <path d={spiral(122, 162, 12, 2, 1)} />
    <path d={spiral(4, 140, 12, 2, 2)} />
  </g>
);

const Paisley = () => (
  <PatternLayer aria-hidden="true">
    <defs>
      <pattern id="paisley" width="250" height="257" patternUnits="userSpaceOnUse" x="45" y="-20">
        <g fill="none" stroke="#f07800" strokeWidth="1.7">
          {[-257, 0, 257].map(y => [-250, 0, 250].map(x => (
            <g key={`${x}${y}`} transform={`translate(${x} ${y})`}><Motifs /></g>
          )))}
        </g>
      </pattern>
    </defs>
    <rect width="100%" height="100%" fill="url(#paisley)" />
  </PatternLayer>
);

/* ---------- payment marks ---------- */

const Circles = ({ right, mix, name }: { right: string; mix: string; name: string }) => (
  <svg width="52" height="44" viewBox="0 0 52 44">
    <circle cx="19" cy="18" r="14" fill="#eb001b" />
    <circle cx="33" cy="18" r="14" fill={right} />
    <path d="M26 6A14 14 0 0 1 26 30A14 14 0 0 1 26 6Z" fill={mix} />
    <text x="26" y="40" fontSize="9" fontWeight="500" fill="#fff" textAnchor="middle" fontFamily={sans}>{name}</text>
  </svg>
);
const PayPal = () => (
  <svg width="54" height="24" viewBox="0 0 54 24"><text x="27" y="17" fontSize="15" fontWeight="800" fontStyle="italic" fill="#fff" textAnchor="middle" fontFamily={sans}>PayPal</text></svg>
);
const Visa = () => (
  <svg width="52" height="24" viewBox="0 0 52 24"><text x="27" y="19" fontSize="19" fontWeight="800" fontStyle="italic" fill="#fff" textAnchor="middle" fontFamily={sans}>VISA</text><path d="M1 5H8L11 12Q8 7 1 6Z" fill="#f7a21b" /></svg>
);
const Quatro = () => (
  <svg width="92" height="44" viewBox="0 0 92 44"><text x="23" y="31" fontSize="26" fontWeight="700" fill="#fff" fontFamily={sans}>uatro</text><circle cx="12" cy="20" r="9.5" fill="none" stroke="#fff" strokeWidth="4.5" /><path d="M11 29L22 30Q14 33 7 42Q4 36 11 29Z" fill="#fff" /></svg>
);
const HomeCredit = () => (
  <svg width="88" height="44" viewBox="0 0 88 44">
    <g fontSize="24" fontWeight="700" fill="#fff" fontFamily={sans}><text x="-1" y="19">H</text><text x="37" y="19">ME</text><text x="-1" y="41">CREDIT</text></g>
    <circle cx="27" cy="11" r="8" fill="none" stroke="#fff" strokeWidth="3.5" /><path d="M23 20Q27 14 31 20Z" fill={dark} stroke="#fff" strokeWidth="1.5" />
  </svg>
);
const Truck = ({ card }: { card?: boolean }) => (
  <svg width="62" height="40" viewBox="0 0 62 40">
    <path d="M14 3Q14 0 17 0H41V9H49Q52 9 54 12L60 22V30Q60 32 57 32H22Q17 32 17 28V22L28 18Z" fill="#74736f" />
    <path d="M44 12H48Q50 12 51 14L55 21H44Z" fill={dark} />
    <circle cx="26" cy="32" r="6.5" fill="#74736f" stroke={dark} strokeWidth="2" /><circle cx="50" cy="32" r="6.5" fill="#74736f" stroke={dark} strokeWidth="2" />
    <g transform="rotate(-22 14 15)"><rect x="2" y="8" width="25" height="16" rx="2" fill="#fbb615" stroke={dark} />{card ? <path d="M2 13H27M5 19H12M15 19H20" stroke={dark} strokeWidth="2.5" /> : <><circle cx="14.5" cy="16" r="4" fill={dark} /><path d="M5 11H8M21 21H24" stroke={dark} strokeWidth="1.5" /></>}</g>
  </svg>
);
const Hands = () => (
  <svg width="80" height="40" viewBox="0 0 80 40">
    <path d="M0 26L5 24Q12 21 17 25L22 28H31Q34 29 31 32H24L33 33L43 25Q47 24 46 27L35 38Q33 40 29 39L16 36L4 38Z" fill="#74736f" />
    <path d="M79 19L74 23Q67 24 62 19L56 16L48 17Q45 16 48 13L54 11L46 9L38 14Q34 14 35 11L47 2Q50 0 54 1L66 4L70 5Z" fill="#74736f" />
    <g transform="rotate(-28 40 20)"><rect x="27" y="13" width="25" height="14" rx="2" fill="#fbb615" stroke={dark} /><circle cx="39.5" cy="20" r="3.5" fill={dark} /><path d="M30 16H33M46 24H49" stroke={dark} strokeWidth="1.5" /></g>
  </svg>
);

/* ---------- page ---------- */

const topLinks = ['O NÁS', 'PREDAJŇA', '3D NÁVRH', 'SLUŽBY', 'KONTAKTY'];
const mainLinks = ['SPRCHOVÉ KÚTY', 'KÚPEĽŇOVÝ NÁBYTOK', 'VANE', 'VODOVODNÉ BATÉRIE', 'SPRCHY', 'UMÝVADLÁ', 'WC A BIDETY', 'INŠPIRÁCIE'];
const selects = ['Vaše meno', 'Vaše tel. číslo', 'Vaša e-mailová adresa *'];
const infoLinks = ['Informácia ohľadom osobných údajov', 'Otváracie hodiny kamennej predajne', 'Obchodné podmienky', 'Reklamačný poriadok', 'Zásady používania cookies', 'Mapa stránky'];
const shopLinks = ['Sprchové kúty', 'Kúpeľnový nábytok', 'Vane', 'Vodovodné batérie', 'Sprchy', 'Umývadlá', 'Wc a Bidety'];

const LinkList = ({ items }: { items: string[] }) => (
  <FootList>
    {items.map(t => <FootItem key={t} $gap={10}><Bullet /><a href="#">{t}</a></FootItem>)}
  </FootList>
);

export default function App() {
  return (
    <>
      <Global />
      <header>
        <Bar>
          <TopRow>
            <TopNav>{topLinks.map(t => <TopLink key={t} href="#" $active={t === 'KONTAKTY'}>{t}</TopLink>)}</TopNav>
            <a href="#"><Logo width={118} filled /></a>
            <Account>
              <IconButton type="button" aria-label="Hľadať"><SearchIcon /></IconButton>
              <TopLink href="#">REGISTROVAŤ/ PRIHLÁSIŤ</TopLink>
              <Cart type="button">320 € / 2KS <BagIcon /></Cart>
            </Account>
          </TopRow>
        </Bar>
        <Bar>
          <MainNav as="nav">
            {mainLinks.map(t => <MainLink key={t} href="#" $small={t === 'VODOVODNÉ BATÉRIE'}>{t}</MainLink>)}
          </MainNav>
        </Bar>
        <Bar>
          <Crumbs as="nav"><a href="#" aria-label="Domov"><HomeIcon /></a><Arrows /><span>Kontakty</span></Crumbs>
        </Bar>
      </header>

      <main>
        <Contact>
          <Info>
            <Title>Sme tu pre Vás</Title>
            <p>Máte nejaké želanie, alebo potrebujete vyriešiť problém s kúpeľňou?<br />Stačí stručne popísať problém, alebo želanie a my sa vynasnažíme.</p>
            <SubTitle $top={30}>FLEX OC Idea, (prízemie v pravo)</SubTitle>
            <p>Kamenná 3,<br />01088 Žilina</p>
            <Reach>
              <ReachRow><PhoneIcon /><span>0905 305 135</span></ReachRow>
              <ReachRow><MailIcon /><MailLink href="mailto:kontakt@flex.equipment">kontakt@flex.equipment</MailLink></ReachRow>
            </Reach>
            <SubTitle $top={50}>Otváracie hodiny:</SubTitle>
            <Hours>
              <HourRow $gap={106}><dt>Po~Pia:</dt><dd>9:00-18:00</dd></HourRow>
              <HourRow $gap={40}><dt>Obedná prestávka:</dt><dd>12:00-13:00</dd></HourRow>
              <HourRow><dd>Sobota na objednávku</dd></HourRow>
              <HourRow><dd>Nedeľa zatvorené</dd></HourRow>
            </Hours>
          </Info>
          <Card>
            <CardTitle>Napíšte nám</CardTitle>
            {selects.map(t => (
              <Field key={t}>
                <Select aria-label={t}><option>{t}</option></Select>
                <Chevron />
              </Field>
            ))}
            <Message aria-label="Vaša správa" placeholder="Vaša správa" />
            <Submit type="button">Odoslať</Submit>
          </Card>
        </Contact>

        <MapBox><MapArt /></MapBox>

        <Benefits>
          {benefits.map(b => <Benefit key={b.text}>{b.art}<span>{b.text}</span></Benefit>)}
        </Benefits>

        <News>
          <Paisley />
          <NewsBody>
            <NewsTitle>Nezmeškajte žiadne novinky<br />v našom eshope</NewsTitle>
            <NewsForm>
              <NewsInput type="email" aria-label="Vaša emailová adresa" placeholder="Vaša emailová adresa" />
              <Submit type="button" $dark>Prihlásiť</Submit>
            </NewsForm>
          </NewsBody>
        </News>
      </main>

      <Foot>
        <FootGrid>
          <FootLogo><Logo width={212} /></FootLogo>
          <FootList>
            <FootHead>Predajňa</FootHead>
            <FootItem>OC Idea</FootItem>
            <FootItem>Kamenná cesta 3</FootItem>
            <FootItem>010 01 Žilina</FootItem>
            <FootItem $gap={12}><FootMailIcon /><a href="mailto:kontakt@flex.equipment">kontakt@flex.equipment</a></FootItem>
            <FootItem $gap={12}><FaceIcon /><a href="#">Facebook/flexequipment"</a></FootItem>
          </FootList>
          <LinkList items={infoLinks} />
          <LinkList items={shopLinks} />
        </FootGrid>
        <PayBar>
          <PayGrid>
            <PayGroup $side="start">
              <PayTitle>PLATBA VOPRED</PayTitle>
              <PayRow $gap={30}>
                <PayCard><Circles right="#00a2e5" mix="#7375cf" name="maestro" /></PayCard>
                <PayCard><Circles right="#f79e1b" mix="#ff5f00" name="mastercard" /></PayCard>
                <PayCard><PayPal /></PayCard>
                <PayCard><Visa /></PayCard>
              </PayRow>
            </PayGroup>
            <PayGroup>
              <PayTitle>PLATBA NA SPLÁTKY</PayTitle>
              <PayRow $gap={27}><Quatro /><HomeCredit /></PayRow>
            </PayGroup>
            <PayGroup $side="end">
              <PayTitle>PLATBA V HOTOVOSTI</PayTitle>
              <PayRow $gap={30}><Truck /><Truck card /><Hands /></PayRow>
            </PayGroup>
          </PayGrid>
        </PayBar>
      </Foot>
    </>
  );
}
